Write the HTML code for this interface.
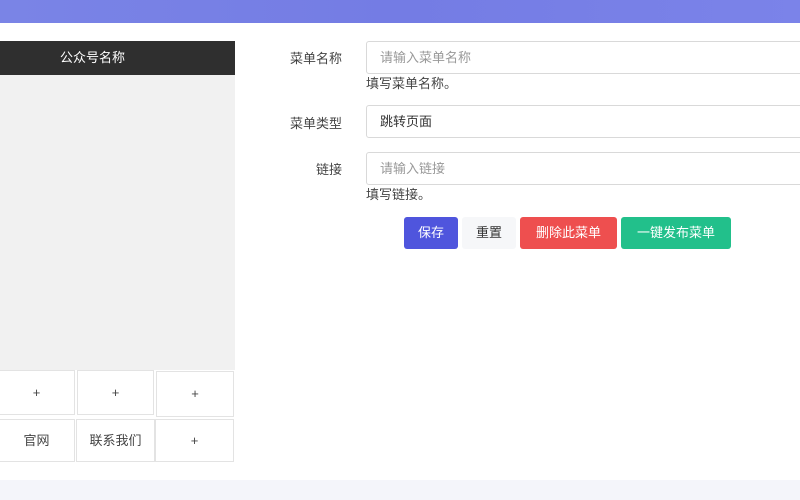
<!DOCTYPE html>
<html><head><meta charset="utf-8"><style>
*{margin:0;padding:0;box-sizing:border-box}
body{width:800px;height:500px;overflow:hidden;background:#fff;font-family:"Liberation Sans","Noto Sans CJK SC",sans-serif;font-size:13px;color:#333;position:relative}
.a{position:absolute}
.hdr{left:0;top:0;width:800px;height:23px;background:linear-gradient(90deg,#7a84e6,#747ce4 50%,#7b83e9)}
.bot{left:0;top:480px;width:800px;height:20px;background:#f4f5fa}
.title{left:0;top:41px;width:235px;height:34px;background:#2f2f2f;color:#fff;line-height:34px;font-size:13px;padding-left:60px}
.gray{left:0;top:75px;width:235px;height:295px;background:#f1f1f1}
.cell{background:#fff;border:1px solid #e3e3e3;text-align:center;color:#444;font-size:13px}
.lbl{width:100px;text-align:right;left:242px;color:#444}
.inp{left:366px;width:450px;height:33px;border:1px solid #d9d9d9;border-radius:3px;padding-left:13px;line-height:31px;color:#999}
.help{left:366px;color:#444}
.btn{top:217px;height:32px;line-height:32px;text-align:center;border-radius:3px;color:#fff}
</style></head><body>
<div class="a hdr"></div>
<div class="a title">公众号名称</div>
<div class="a gray"></div>
<div class="a cell" style="left:-2px;top:370px;width:77px;height:45px;line-height:43px">+</div>
<div class="a cell" style="left:77px;top:370px;width:77px;height:45px;line-height:43px">+</div>
<div class="a cell" style="left:156px;top:371px;width:78px;height:46px;line-height:44px">+</div>
<div class="a cell" style="left:-2px;top:419px;width:77px;height:43px;line-height:41px">官网</div>
<div class="a cell" style="left:76px;top:419px;width:79px;height:43px;line-height:41px">联系我们</div>
<div class="a cell" style="left:155px;top:419px;width:79px;height:43px;line-height:41px">+</div>
<div class="a lbl" style="top:48px">菜单名称</div>
<div class="a inp" style="top:41px">请输入菜单名称</div>
<div class="a help" style="top:73px">填写菜单名称。</div>
<div class="a lbl" style="top:113px">菜单类型</div>
<div class="a inp" style="top:105px;color:#333">跳转页面</div>
<div class="a lbl" style="top:159px">链接</div>
<div class="a inp" style="top:152px">请输入链接</div>
<div class="a help" style="top:184px">填写链接。</div>
<div class="a btn" style="left:404px;width:54px;background:#4f55dd">保存</div>
<div class="a btn" style="left:462px;width:54px;background:#f6f7f9;color:#333">重置</div>
<div class="a btn" style="left:520px;width:97px;background:#ee4f4f">删除此菜单</div>
<div class="a btn" style="left:621px;width:110px;background:#22c08b">一键发布菜单</div>
<div class="a bot"></div>
</body></html>
